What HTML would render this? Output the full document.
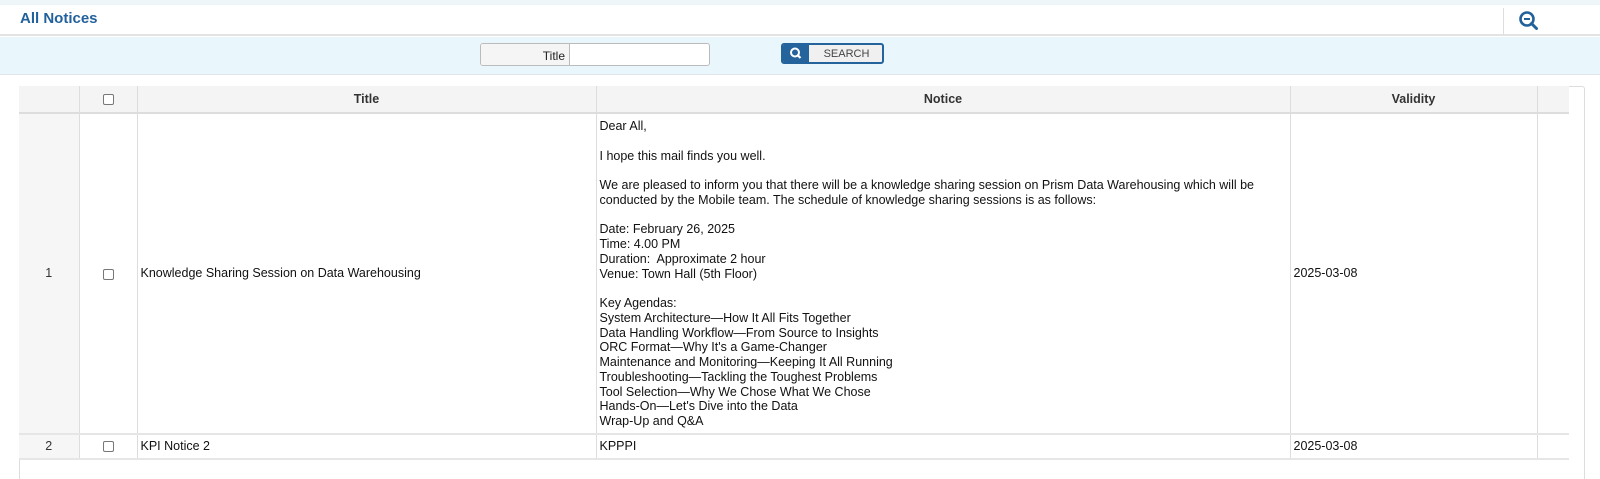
<!DOCTYPE html>
<html><head><meta charset="utf-8"><style>
*{box-sizing:border-box;margin:0;padding:0}
body{width:1600px;height:479px;background:#fff;font-family:"Liberation Sans",sans-serif;position:relative;overflow:hidden;color:#111}
.top{position:absolute;left:0;top:0;width:1600px;height:5px;background:#eef6f9}
.hdr{position:absolute;left:0;top:5px;width:1600px;height:31px;background:#fff;border-bottom:2px solid #e3e3e3}
.hdr h1{position:absolute;left:20px;top:5px;font-size:15px;color:#23619c;font-weight:bold}
.zsep{position:absolute;left:1503px;top:3px;width:1px;height:26px;background:#ddd}
.srch{position:absolute;left:0;top:37px;width:1600px;height:38px;background:#e9f6fc;border-bottom:1px solid #dde6ea}
.fld{position:absolute;left:480px;top:6px;width:230px;height:23px;border:1px solid #bbb;border-radius:3px;background:#fff;overflow:hidden}
.fld .l{position:absolute;left:0;top:0;width:89px;height:21px;background:#f5f5f5;border-right:1px solid #bbb;font-size:12px;text-align:right;padding:5px 4px 0 0;color:#222}
.btn{position:absolute;left:781px;top:6px;width:103px;height:21px;border:2px solid #24639c;border-radius:3px;background:#f0f0f0;overflow:hidden}
.btn .i{position:absolute;left:0;top:0;width:26px;height:17px;background:#24639c}
.btn .t{position:absolute;left:26px;top:0;width:75px;height:17px;font-size:11px;color:#444;text-align:center;padding-top:3px}
table{position:absolute;left:19px;top:86px;border-collapse:collapse;font-size:12.5px}
.tbl{position:absolute;left:19px;top:86px;width:1566px;height:393px;border:1px solid #ddd;border-bottom:none;border-radius:3px 3px 0 0}
th{background:#f4f4f4;height:27px;font-weight:bold;font-size:12.5px;color:#333;border-right:1px solid #ddd;border-bottom:2px solid #ddd}
td{border-right:1px solid #ddd;border-bottom:2px solid #e6e6e6;vertical-align:middle;padding-left:3px}
td.n{background:#f6f6f6;text-align:center;padding:0;color:#333}
td.c{text-align:center;padding:0}
td.e{border-right:none}
.cb{display:inline-block;width:11px;height:11px;border:1px solid #777;border-radius:2px;background:#fff;vertical-align:middle}
.notice{line-height:14.75px;padding-top:5px;padding-bottom:4px}
</style></head><body>
<div class="top"></div>
<div class="hdr"><h1>All Notices</h1><div class="zsep"></div>
<svg style="position:absolute;left:1518px;top:5px" width="22" height="22" viewBox="0 0 22 22"><circle cx="9" cy="9" r="6.5" fill="none" stroke="#23619c" stroke-width="2.6"/><line x1="13.5" y1="13.5" x2="18.5" y2="18.5" stroke="#23619c" stroke-width="3" stroke-linecap="round"/><line x1="6" y1="9" x2="12" y2="9" stroke="#23619c" stroke-width="2"/></svg></div>
<div class="srch">
<div class="fld"><div class="l">Title</div></div>
<div class="btn"><div class="i"><svg width="26" height="17" viewBox="0 0 26 17"><circle cx="12" cy="7.5" r="4" fill="none" stroke="#fff" stroke-width="2"/><line x1="15" y1="10.5" x2="17.5" y2="13" stroke="#fff" stroke-width="2.2"/></svg></div><div class="t">SEARCH</div></div>
</div>
<div class="tbl"></div>
<table>
<tr><th style="width:60px"></th><th style="width:58px"><span class="cb"></span></th><th style="width:459px">Title</th><th style="width:694px">Notice</th><th style="width:247px">Validity</th><th style="width:32px;border-right:none"></th></tr>
<tr><td class="n">1</td><td class="c"><span class="cb"></span></td><td>Knowledge Sharing Session on Data Warehousing</td><td class="notice">Dear All,<br><br>I hope this mail finds you well.<br><br>We are pleased to inform you that there will be a knowledge sharing session on Prism Data Warehousing which will be<br>conducted by the Mobile team. The schedule of knowledge sharing sessions is as follows:<br><br>Date: February 26, 2025<br>Time: 4.00 PM<br>Duration:&nbsp; Approximate 2 hour<br>Venue: Town Hall (5th Floor)<br><br>Key Agendas:<br>System Architecture—How It All Fits Together<br>Data Handling Workflow—From Source to Insights<br>ORC Format—Why It's a Game-Changer<br>Maintenance and Monitoring—Keeping It All Running<br>Troubleshooting—Tackling the Toughest Problems<br>Tool Selection—Why We Chose What We Chose<br>Hands-On—Let's Dive into the Data<br>Wrap-Up and Q&amp;A</td><td>2025-03-08</td><td class="e"></td></tr>
<tr><td class="n" style="height:25px">2</td><td class="c"><span class="cb"></span></td><td>KPI Notice 2</td><td>KPPPI</td><td>2025-03-08</td><td class="e"></td></tr>
</table>
</body></html>
